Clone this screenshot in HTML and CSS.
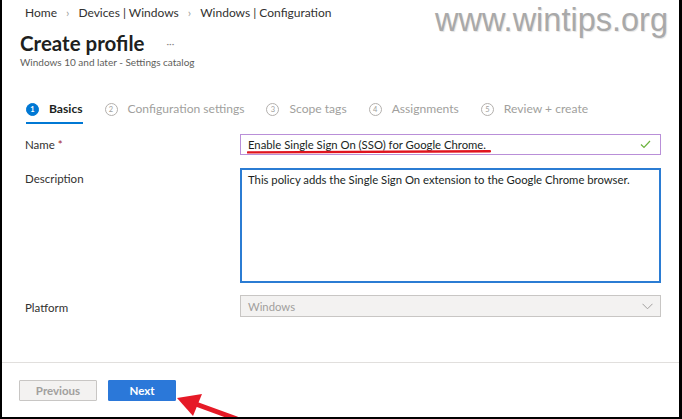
FILE: index.html
```html
<!DOCTYPE html>
<html lang="en">
<head>
<meta charset="utf-8">
<title>Create profile</title>
<link rel="stylesheet" href="styles.css">
</head>
<body>
<div class="frame">
  <nav class="crumbs">
    <span>Home</span>
    <span class="sep">&#8250;</span>
    <span>Devices | Windows</span>
    <span class="sep">&#8250;</span>
    <span>Windows | Configuration</span>
  </nav>
  <div class="title-row">
    <h1 class="title">Create profile</h1>
    <span class="more">&middot;&middot;&middot;</span>
  </div>
  <div class="subtitle">Windows 10 and later - Settings catalog</div>

  <div class="steps">
    <div class="step active"><span class="num">1</span><span class="label">Basics</span></div>
    <div class="step"><span class="num">2</span><span class="label">Configuration settings</span></div>
    <div class="step"><span class="num">3</span><span class="label">Scope tags</span></div>
    <div class="step"><span class="num">4</span><span class="label">Assignments</span></div>
    <div class="step"><span class="num">5</span><span class="label">Review + create</span></div>
  </div>

  <div class="form">
    <div class="flabel center">Name <span class="req">*</span></div>
    <div class="input name-input">
      <span class="value">Enable Single Sign On (SSO) for Google Chrome.</span>
      <svg class="check" width="11" height="9" viewBox="0 0 11 9"><path d="M1 4.5 L4 7.5 L10 1" fill="none" stroke="#6bb33c" stroke-width="1.2"/></svg>
      <svg class="scribble" width="244" height="5" viewBox="0 0 244 5"><path d="M1 3.4 Q 120 2.4 243 2.2" fill="none" stroke="#e0141e" stroke-width="2.4" stroke-linecap="round"/></svg>
    </div>

    <div class="flabel top">Description</div>
    <div class="textarea">This policy adds the Single Sign On extension to the Google Chrome browser.</div>

    <div class="flabel center">Platform</div>
    <div class="select">
      <span>Windows</span>
      <svg width="11" height="7" viewBox="0 0 11 7"><path d="M0.5 0.8 L5.5 5.8 L10.5 0.8" fill="none" stroke="#a19f9d" stroke-width="1"/></svg>
    </div>
  </div>

  <div class="spacer"></div>

  <div class="footer">
    <button class="btn prev">Previous</button>
    <button class="btn next">Next</button>
  </div>

  <div class="watermark">www.wintips.org</div>
  <svg class="arrow" width="70" height="30" viewBox="0 0 70 30">
    <path d="M2 10 L27 6 L18 28 Z" fill="#e61a27"/>
    <path d="M18 15 L62 31" stroke="#e61a27" stroke-width="5" fill="none"/>
  </svg>
</div>
</body>
</html>
```
FILE: styles.css
```css
html, body {
  margin: 0;
  padding: 0;
  background: #ffffff;
}
body {
  font-family: "Lato", "Noto Sans", sans-serif;
  color: #323130;
}
.frame {
  position: relative;
  width: 682px;
  height: 419px;
  box-sizing: border-box;
  border-left: 2px solid #000;
  border-right: 3px solid #000;
  border-bottom: 2px solid #000;
  display: flex;
  flex-direction: column;
  overflow: hidden;
}
.crumbs {
  display: flex;
  align-items: center;
  gap: 9px;
  padding: 5px 0 0 23px;
  font-size: 12px;
  line-height: 16px;
  color: #323130;
}
.crumbs .sep {
  color: #a19f9d;
  font-size: 12px;
  margin: 0;
}
.title-row {
  display: flex;
  align-items: center;
  gap: 22px;
  margin-top: 10px;
  padding-left: 18px;
}
.title {
  margin: 0;
  font-size: 20.5px;
  line-height: 24px;
  font-weight: 700;
  color: #201f1e;
}
.more {
  color: #8a8886;
  font-size: 10px;
  line-height: 10px;
}
.subtitle {
  padding-left: 18px;
  font-size: 10px;
  line-height: 13px;
  color: #605e5c;
  margin-top: 1px;
}
.steps {
  display: flex;
  gap: 22px;
  padding-left: 24px;
  margin-top: 32px;
  font-size: 12.1px;
  line-height: 16px;
  color: #a19f9d;
}
.step {
  display: flex;
  align-items: center;
  gap: 10px;
  padding-bottom: 5px;
  border-bottom: 2px solid transparent;
}
.step .num {
  width: 11px;
  height: 11px;
  border: 1px solid #b3b0ad;
  border-radius: 50%;
  font-size: 7.5px;
  line-height: 11px;
  text-align: center;
  color: #a19f9d;
}
.step.active {
  border-bottom-color: #0078d4;
  color: #201f1e;
  font-weight: 700;
}
.step.active .num {
  background: #0078d4;
  border-color: #0078d4;
  color: #fff;
  font-weight: 700;
}
.form {
  display: grid;
  grid-template-columns: 215px 421px;
  grid-template-rows: 21px 115px 22px;
  row-gap: 13px;
  padding-left: 23px;
  margin-top: 10px;
  font-size: 11.3px;
}
.flabel {
  color: #323130;
  font-size: 11.5px;
}
.flabel.center {
  align-self: center;
}
.flabel.top {
  padding-top: 4px;
}
.req {
  color: #a4262c;
}
.input {
  position: relative;
  height: 21px;
  box-sizing: border-box;
  border: 1px solid #b98fd8;
  display: flex;
  align-items: center;
  padding: 0 9px 0 7px;
  justify-content: space-between;
  color: #201f1e;
}
.scribble {
  position: absolute;
  left: 6px;
  bottom: 0px;
}
.textarea {
  height: 115px;
  box-sizing: border-box;
  border: 2px solid #2b7cd3;
  padding: 2px 6px;
  line-height: 16px;
  color: #201f1e;
}
.select {
  height: 22px;
  box-sizing: border-box;
  border: 1px solid #c8c6c4;
  background: #f3f2f1;
  display: flex;
  align-items: center;
  justify-content: space-between;
  padding: 0 7px 0 7px;
  color: #a19f9d;
  margin-top: -1px;
}
.spacer {
  flex: 1;
}
.footer {
  border-top: 1px solid #e1dfdd;
  height: 55px;
  box-sizing: border-box;
  padding: 17px 0 0 17px;
  display: flex;
  gap: 11px;
  align-items: flex-start;
}
.btn {
  height: 21px;
  box-sizing: border-box;
  font-family: "Lato", sans-serif;
  font-size: 11.5px;
  font-weight: 700;
  padding: 0;
  border-radius: 1px;
}
.btn.prev {
  width: 78px;
  background: #f3f2f1;
  border: 1px solid #c8c6c4;
  color: #a19f9d;
}
.btn.next {
  width: 68px;
  background: #2b78d9;
  border: 1px solid #2b78d9;
  color: #ffffff;
}
.watermark {
  position: absolute;
  left: 433px;
  top: 4px;
  font-family: "Liberation Sans", Arial, sans-serif;
  font-size: 32.5px;
  line-height: 32px;
  color: #a9a9a9;
  text-shadow: 1px 1px 1px #e4e4e4;
}
.arrow {
  position: absolute;
  left: 173px;
  top: 388px;
}
```
